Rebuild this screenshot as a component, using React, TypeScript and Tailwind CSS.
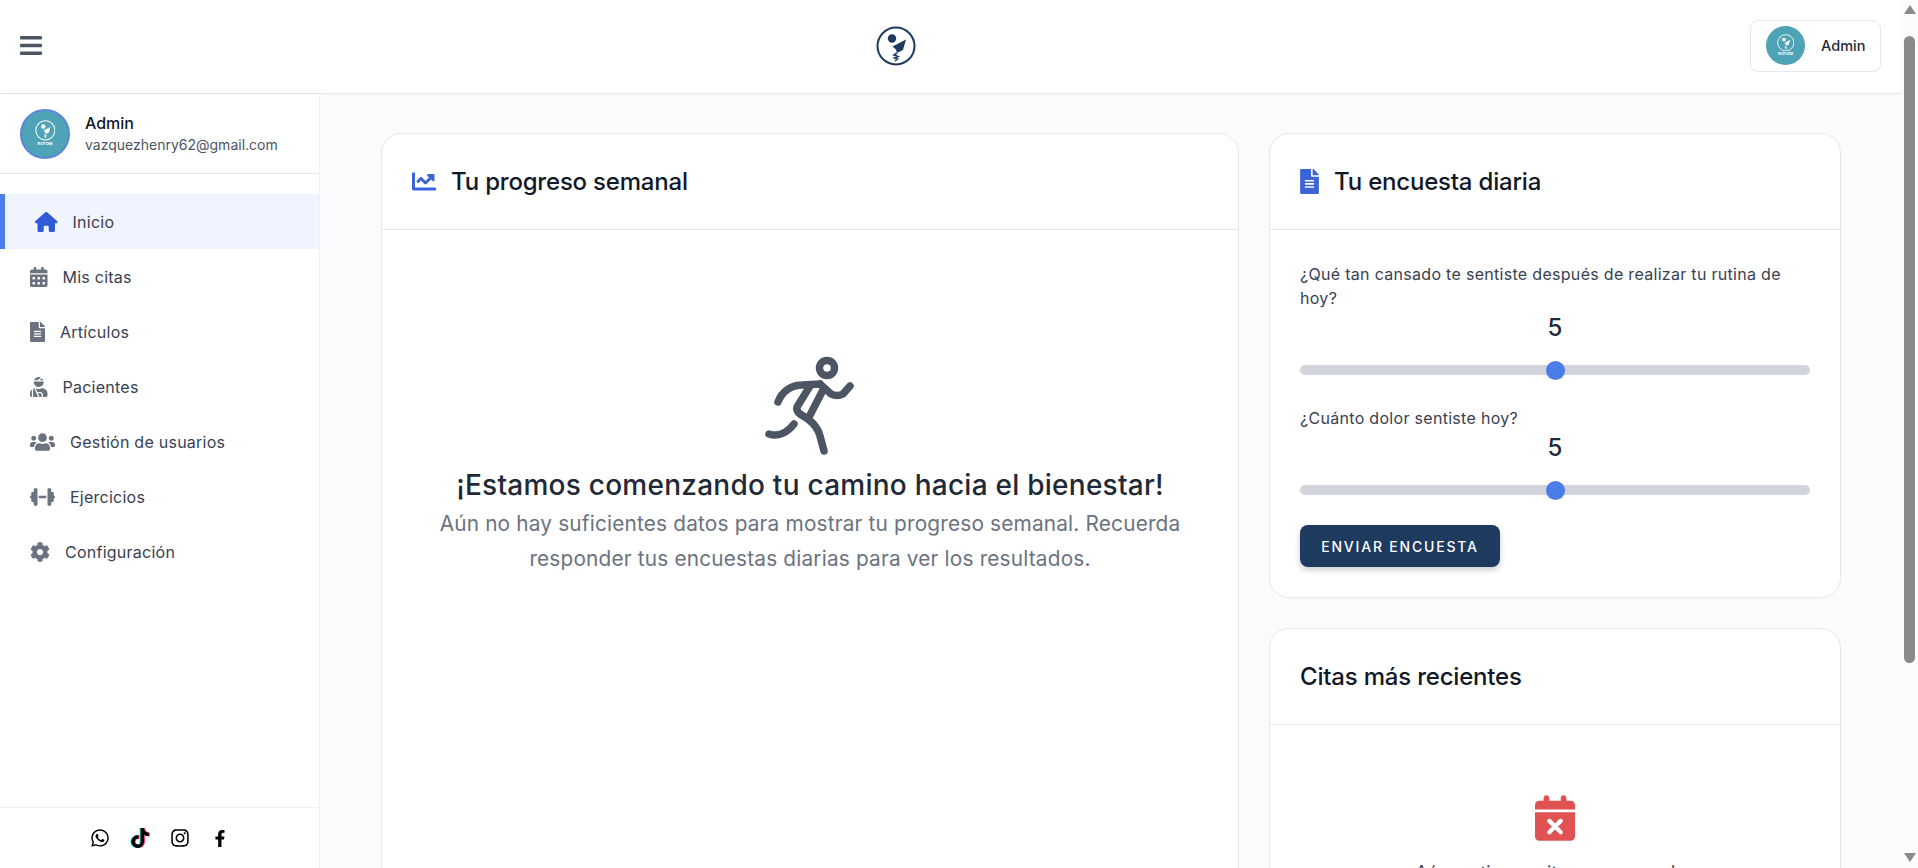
import { FaBars, FaCalendarAlt, FaFileAlt, FaUserInjured, FaUsers, FaCog, FaChartLine, FaWhatsapp, FaTiktok, FaInstagram, FaFacebookF } from "react-icons/fa";
import { FaCalendarXmark, FaDumbbell, FaHouse } from "react-icons/fa6";
import type { ComponentType, ReactNode } from "react";

const font = { fontFamily: "Inter, 'Noto Sans', sans-serif" };

const navItems: { label: string; icon: ComponentType<{ className?: string }>; width: string; active?: boolean }[] = [
  { label: "Inicio", icon: FaHouse, width: "w-[22.5px]", active: true },
  { label: "Mis citas", icon: FaCalendarAlt, width: "w-[17.5px]" },
  { label: "Artículos", icon: FaFileAlt, width: "w-[15px]" },
  { label: "Pacientes", icon: FaUserInjured, width: "w-[17.5px]" },
  { label: "Gestión de usuarios", icon: FaUsers, width: "w-[25px]" },
  { label: "Ejercicios", icon: FaDumbbell, width: "w-[25px]" },
  { label: "Configuración", icon: FaCog, width: "w-[20px]" },
];

function LogoMark({ className, color }: { className?: string; color: string }) {
  return (
    <svg viewBox="0 0 40 40" className={className} fill="none">
      <circle cx="20" cy="20" r="18.5" stroke={color} strokeWidth="2" />
      <circle cx="16" cy="12.5" r="4.2" fill={color} />
      <path d="M16.5 20.5 L30 13.5 L27 24 L21 27 L20 23.5 Z" fill={color} />
      <path d="M21 27 L18 29 L22 30.5 L18.5 32 L21.5 33 L19 35" stroke={color} strokeWidth="1.6" />
    </svg>
  );
}

function Avatar({ size, ring }: { size: string; ring?: boolean }) {
  return (
    <div className={`${size} shrink-0 rounded-full bg-[#4fa3b6] flex flex-col items-center justify-center ${ring ? "border-2 border-[#5b87d8]" : ""}`}>
      <LogoMark className="w-[45%] h-[45%]" color="#ffffff" />
      <span className="text-[4px] leading-[6px] font-bold text-white">ROTOM</span>
    </div>
  );
}

function Runner() {
  return (
    <svg viewBox="0 0 140 130" className="w-[140px] h-[130px]" fill="none" stroke="#4b5563" strokeWidth="7.5" strokeLinecap="round" strokeLinejoin="round">
      <circle cx="87" cy="27" r="7.5" />
      <path d="M38 61 C42 50 52 44 62 44 L80 43" />
      <path d="M70 45 L57 66 Q56 70 60 73 L68 78 L84 47" />
      <path d="M80 43 L91 53 Q97 56 103 53 L110 45" />
      <path d="M68 78 Q78 86 80 95 L84 110" />
      <path d="M29 93 C38 96 47 92 54 83" />
    </svg>
  );
}

function Slider({ label }: { label: string }) {
  return (
    <div>
      <p className="max-w-[500px] text-[16px] leading-[24px] text-[#374151] tracking-[0.3px]">{label}</p>
      <p className="text-center text-[24px] leading-[36px] font-medium text-[#1f2937]">5</p>
      <div className="h-[10px] mt-[19px] rounded-full bg-[#d1d5db] flex items-center justify-center">
        <div className="w-[19px] h-[19px] shrink-0 rounded-full bg-[#4a7cea]" />
      </div>
    </div>
  );
}

function CardHeader({ icon, title }: { icon?: ReactNode; title: string }) {
  return (
    <div className="h-[96px] border-b border-[#e5e7eb] px-[30px] flex items-center gap-[15px]">
      {icon}
      <h2 className="text-[24px] font-medium text-[#111827] tracking-[-0.2px]">{title}</h2>
    </div>
  );
}

export default function App() {
  return (
    <div style={font} className="flex h-[868px] w-full overflow-hidden bg-white">
      <div className="flex-1 min-w-0 flex flex-col">
        {/* Header */}
        <header className="h-[94px] shrink-0 border-b border-[#e5e7eb] pl-[20px] pr-[20px] pb-[2px] flex items-center justify-between">
          <FaBars className="w-[22px] h-[25px] text-[#4b5563]" />
          <LogoMark className="w-[40px] h-[40px]" color="#1e3a5f" />
          <div className="w-[131px] h-[52px] rounded-lg border border-[#e5e7eb] pl-[15px] flex items-center gap-[16px]">
            <Avatar size="w-[39px] h-[39px]" />
            <span className="text-[14.5px] font-medium text-[#1f2937]">Admin</span>
          </div>
        </header>

        <div className="flex-1 min-h-0 flex">
          {/* Sidebar */}
          <aside className="w-[320px] shrink-0 bg-white border-r border-[#eef0f2] shadow-[2px_0_4px_rgba(0,0,0,0.04)] flex flex-col">
            <div className="h-[80px] shrink-0 border-b border-[#e5e7eb] pl-[20px] flex items-center gap-[15px]">
              <Avatar size="w-[50px] h-[50px]" ring />
              <div>
                <p className="text-[16px] leading-[22px] font-medium text-[#111827]">Admin</p>
                <p className="text-[14px] leading-[22px] text-[#4b5563]">vazquezhenry62@gmail.com</p>
              </div>
            </div>
            <nav className="flex-1 pt-[20px]">
              {navItems.map(({ label, icon: Icon, width, active }) => (
                <div
                  key={label}
                  className={`h-[55px] flex items-center gap-[15px] text-[16px] text-[#374151] tracking-[0.25px] ${active ? "bg-[#eff4fe] border-l-[5px] border-[#4a7cea] pl-[30px]" : "pl-[30px]"}`}
                >
                  <Icon className={`h-5 ${width} ${active ? "text-[#2f5ad8]" : "text-[#6b7280]"}`} />
                  {label}
                </div>
              ))}
            </nav>
            <div className="h-[61px] shrink-0 border-t border-[#f0f1f3] flex items-center justify-center gap-[20px] text-black">
              <FaWhatsapp className="w-5 h-5" />
              <FaTiktok className="w-5 h-5 [filter:drop-shadow(-1px_0_0_#25f4ee)_drop-shadow(1px_0_0_#fe2c55)]" />
              <FaInstagram className="w-5 h-5" />
              <FaFacebookF className="w-5 h-[17px]" />
            </div>
          </aside>

          {/* Main */}
          <main className="flex-1 min-w-0 bg-[#f9fbfd] pt-[39px] pl-[61px] pr-[60px] overflow-hidden">
            <div className="grid grid-cols-[3fr_2fr] gap-[30px] items-start">
              <section className="h-[900px] bg-white rounded-[20px] border border-[#e5e7eb]">
                <CardHeader icon={<FaChartLine className="w-[24px] h-[25px] text-[#3b64d8]" />} title="Tu progreso semanal" />
                <div className="pt-[111px] flex flex-col items-center text-center">
                  <Runner />
                  <h3 className="-mt-[7px] text-[28px] leading-[42px] font-medium text-[#1f2937] tracking-[0.25px]">¡Estamos comenzando tu camino hacia el bienestar!</h3>
                  <p className="w-[770px] text-[20.8px] leading-[35px] text-[#6b7280] tracking-[0.18px]">Aún no hay suficientes datos para mostrar tu progreso semanal. Recuerda responder tus encuestas diarias para ver los resultados.</p>
                </div>
              </section>

              <div className="flex flex-col gap-[30px]">
                <section className="bg-white rounded-[20px] border border-[#e5e7eb]">
                  <CardHeader icon={<FaFileAlt className="w-[19px] h-[25px] text-[#3b64d8]" />} title="Tu encuesta diaria" />
                  <div className="px-[30px] pt-[32px] pb-[30px] flex flex-col gap-[31px]">
                    <Slider label="¿Qué tan cansado te sentiste después de realizar tu rutina de hoy?" />
                    <Slider label="¿Cuánto dolor sentiste hoy?" />
                    <button className="-mt-[1px] w-[200px] h-[42px] rounded-lg bg-[#1e3a5f] text-white text-[14px] font-medium tracking-[1.8px] shadow-[0_3px_6px_rgba(0,0,0,0.2)]">ENVIAR ENCUESTA</button>
                  </div>
                </section>
                <section className="h-[400px] bg-white rounded-[20px] border border-[#e5e7eb]">
                  <CardHeader title="Citas más recientes" />
                  <div className="pt-[70px] flex flex-col items-center">
                    <FaCalendarXmark className="w-[40px] h-[46px] text-[#e05252]" />
                    <p className="mt-[18px] text-[18px] leading-[28px] text-[#374151]">Aún no tienes citas programadas</p>
                  </div>
                </section>
              </div>
            </div>
          </main>
        </div>
      </div>

      {/* Scrollbar */}
      <div className="w-[17px] shrink-0 bg-[#f9fbfd] flex flex-col items-center pt-[5px] pb-[6px]">
        <div className="w-0 h-0 border-x-[6px] border-x-transparent border-b-[9px] border-b-[#8a8a8a]" />
        <div className="w-[11px] h-[627px] mt-[22px] rounded-full bg-[#8a8a8a]" />
        <div className="flex-1" />
        <div className="w-0 h-0 border-x-[6px] border-x-transparent border-t-[9px] border-t-[#8a8a8a]" />
      </div>
    </div>
  );
}
